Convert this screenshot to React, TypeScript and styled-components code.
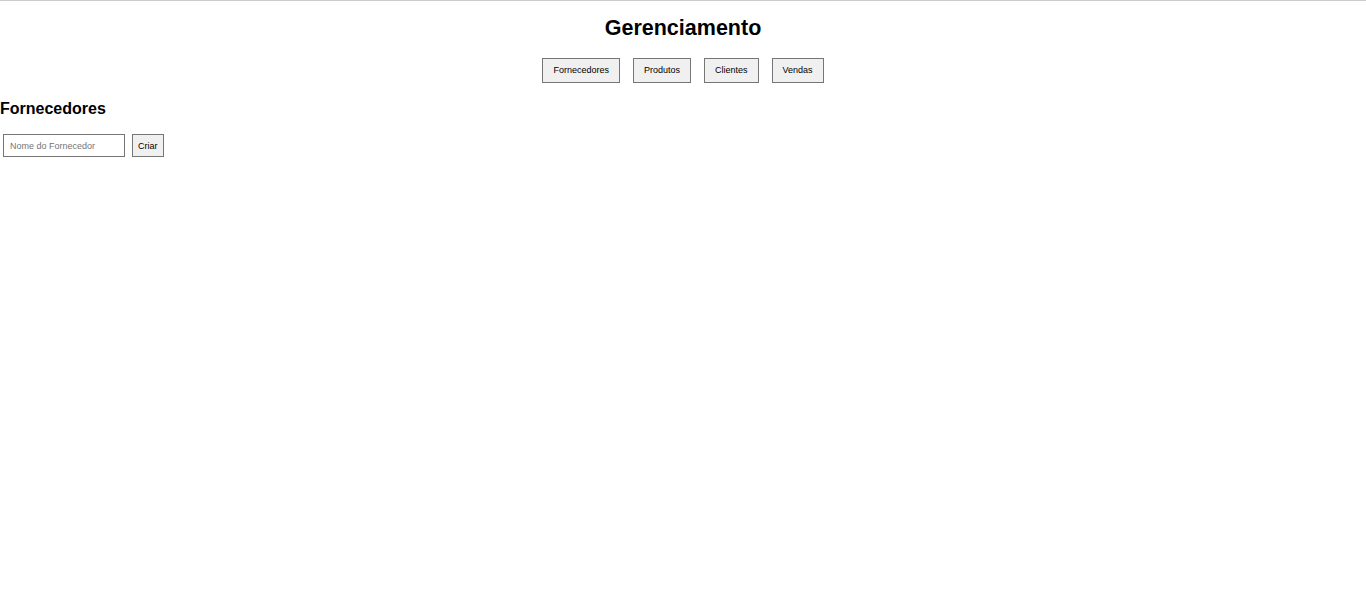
import React from "react";
import styled, { createGlobalStyle } from "styled-components";

const Global = createGlobalStyle`
  html, body { margin: 0; padding: 0; background: #fff; }
  body { font-family: "Liberation Sans", Arial, sans-serif; color: #000; }
`;

const Page = styled.div`
  border-top: 1px solid #cccccc;
  min-height: 604px;
`;

const Title = styled.h1`
  margin: 16px 0 0;
  font-size: 21.5px;
  line-height: 23px;
  font-weight: bold;
  text-align: center;
`;

const Nav = styled.nav`
  display: flex;
  justify-content: center;
  gap: 13px;
  margin-top: 18px;
`;

const NavButton = styled.button`
  font-family: "Liberation Sans", Arial, sans-serif;
  font-size: 9px;
  line-height: 11px;
  height: 25px;
  padding: 0 10px;
  background: #f0f0f0;
  border: 1px solid #767676;
  border-radius: 0;
  color: #000;
`;

const SectionTitle = styled.h2`
  margin: 16px 0 0;
  font-size: 16px;
  line-height: 19px;
  font-weight: bold;
`;

const Form = styled.div`
  display: flex;
  align-items: center;
  gap: 7px;
  margin: 16px 0 0 3px;
`;

const Input = styled.input`
  box-sizing: border-box;
  width: 122px;
  height: 23px;
  padding: 0 6px;
  font-family: "Liberation Sans", Arial, sans-serif;
  font-size: 9px;
  border: 1px solid #767676;
  border-radius: 0;
  &::placeholder { color: #757575; }
`;

const SmallButton = styled.button`
  box-sizing: border-box;
  height: 23px;
  padding: 0 5px;
  font-family: "Liberation Sans", Arial, sans-serif;
  font-size: 9px;
  background: #f0f0f0;
  border: 1px solid #767676;
  border-radius: 0;
  color: #000;
`;

export default function App() {
  const tabs = ["Fornecedores", "Produtos", "Clientes", "Vendas"];
  return (
    <>
      <Global />
      <Page>
        <Title>Gerenciamento</Title>
        <Nav>
          {tabs.map((t) => (
            <NavButton key={t}>{t}</NavButton>
          ))}
        </Nav>
        <SectionTitle>Fornecedores</SectionTitle>
        <Form>
          <Input placeholder="Nome do Fornecedor" />
          <SmallButton>Criar</SmallButton>
        </Form>
      </Page>
    </>
  );
}
